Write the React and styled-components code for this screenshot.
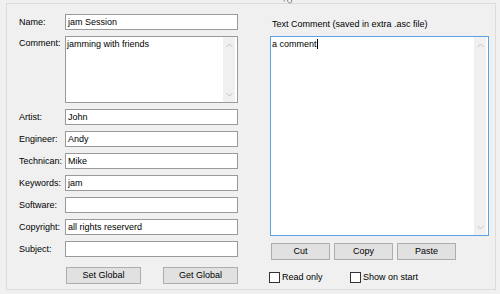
import React from "react";
import styled, { createGlobalStyle } from "styled-components";

const Global = createGlobalStyle`
  html, body { margin: 0; padding: 0; background: #f0f0f0; }
  body { font-family: "Liberation Sans", Arial, sans-serif; font-size: 9px; color: #000; }
`;

const Page = styled.div`
  position: relative;
  width: 500px;
  height: 294px;
  overflow: hidden;
  background: #f0f0f0;
  padding-top: 3px;
  padding-left: 6px;
  box-sizing: border-box;
`;

const Mark = styled.svg`
  position: absolute;
  top: 0;
  left: 283px;
`;

const Frame = styled.div`
  width: 490px;
  height: 287px;
  box-sizing: border-box;
  border: 1px solid #dcdcdc;
  display: flex;
  padding: 10px 6px 0 12px;
  gap: 32px;
`;

const LeftCol = styled.div`
  width: 219px;
  display: grid;
  grid-template-columns: 46px 173px;
  row-gap: 6px;
  align-items: center;
  align-content: start;
`;

const Label = styled.div`
  white-space: nowrap;
  line-height: 11px;
  align-self: ${(p) => (p.$top ? "start" : "center")};
  padding-top: ${(p) => (p.$top ? "2px" : "0")};
`;

const Field = styled.div`
  height: 16px;
  box-sizing: border-box;
  background: #fff;
  border: 1px solid #9a9a9a;
  padding: 0 2px;
  line-height: 14px;
  white-space: nowrap;
  overflow: hidden;
`;

const Memo = styled.div`
  height: ${(p) => p.$h}px;
  box-sizing: border-box;
  background: #fff;
  border: 1px solid ${(p) => (p.$focus ? "#5aa2e6" : "#9a9a9a")};
  display: flex;
`;

const MemoText = styled.div`
  flex: 1;
  padding: 2px 1px;
  line-height: 11px;
`;

const Caret = styled.span`
  display: inline-block;
  width: 1px;
  height: 10px;
  background: #000;
  vertical-align: -2px;
`;

const Scroll = styled.div`
  width: 12px;
  margin: 0 2px 0 0;
  background: #f0f0f0;
  display: flex;
  flex-direction: column;
  justify-content: space-between;
`;

const ScrollBtn = styled.div`
  height: 16px;
  display: flex;
  align-items: center;
  justify-content: center;
`;

const BtnRow = styled.div`
  grid-column: 2;
  display: flex;
  justify-content: space-between;
  padding-left: 1px;
  margin-top: 4px;
`;

const Button = styled.div`
  width: ${(p) => p.$w}px;
  height: 17px;
  box-sizing: border-box;
  background: #e1e1e1;
  border: 1px solid #adadad;
  display: flex;
  align-items: center;
  justify-content: center;
  line-height: 11px;
`;

const RightCol = styled.div`
  width: 219px;
  display: flex;
  flex-direction: column;
  padding-top: 5px;
`;

const RightLabel = styled.div`
  line-height: 11px;
  padding-left: 2px;
  margin-bottom: 6px;
`;

const RightButtons = styled.div`
  display: flex;
  gap: 4px;
  margin-top: 7px;
  padding-left: 1px;
`;

const CheckRow = styled.div`
  display: grid;
  grid-template-columns: 81px auto;
  margin-top: 12px;
  margin-left: -1px;
`;

const Check = styled.label`
  display: flex;
  align-items: center;
  gap: 2px;
  line-height: 11px;
`;

const Box = styled.span`
  width: 11px;
  height: 11px;
  box-sizing: border-box;
  border: 1px solid #333;
  background: #fff;
`;

const Chevron = ({ down }) => (
  <svg width="7" height="5" viewBox="0 0 7 5">
    <polyline
      points={down ? "0.5,1 3.5,4 6.5,1" : "0.5,4 3.5,1 6.5,4"}
      fill="none"
      stroke="#c2c2c2"
      strokeWidth="1"
    />
  </svg>
);

const ScrollBar = () => (
  <Scroll>
    <ScrollBtn>
      <Chevron />
    </ScrollBtn>
    <ScrollBtn>
      <Chevron down />
    </ScrollBtn>
  </Scroll>
);

const fields = [
  ["Artist:", "John"],
  ["Engineer:", "Andy"],
  ["Technican:", "Mike"],
  ["Keywords:", "jam"],
  ["Software:", ""],
  ["Copyright:", "all rights reserverd"],
  ["Subject:", ""],
];

export default function App() {
  return (
    <Page>
      <Global />
      <Mark width="10" height="4" viewBox="0 0 10 4">
        <path d="M0.5 0.5 L2 1.2 M4.5 0 C4.5 2 6 3.5 7.5 3 C8.5 2.6 9 1.5 8.5 0" fill="none" stroke="#8a8a8a" strokeWidth="1" />
      </Mark>
      <Frame>
        <LeftCol>
          <Label>Name:</Label>
          <Field>jam Session</Field>
          <Label $top>Comment:</Label>
          <Memo $h={67}>
            <MemoText>jamming with friends</MemoText>
            <ScrollBar />
          </Memo>
          {fields.map(([l, v]) => (
            <React.Fragment key={l}>
              <Label>{l}</Label>
              <Field>{v}</Field>
            </React.Fragment>
          ))}
          <BtnRow>
            <Button $w={75}>Set Global</Button>
            <Button $w={75}>Get Global</Button>
          </BtnRow>
        </LeftCol>
        <RightCol>
          <RightLabel>Text Comment (saved in extra .asc file)</RightLabel>
          <Memo $h={200} $focus>
            <MemoText>
              a comment
              <Caret />
            </MemoText>
            <ScrollBar />
          </Memo>
          <RightButtons>
            <Button $w={59}>Cut</Button>
            <Button $w={59}>Copy</Button>
            <Button $w={59}>Paste</Button>
          </RightButtons>
          <CheckRow>
            <Check>
              <Box />
              Read only
            </Check>
            <Check>
              <Box />
              Show on start
            </Check>
          </CheckRow>
        </RightCol>
      </Frame>
    </Page>
  );
}
